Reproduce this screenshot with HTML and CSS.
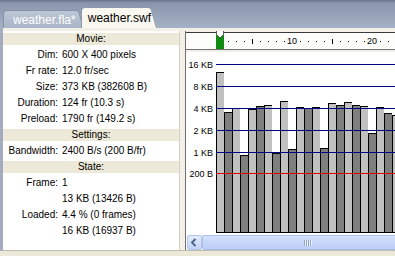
FILE: index.html
```html
<!DOCTYPE html>
<html lang="en">
<head>
    <meta charset="UTF-8">
    <title>weather.swf - Bandwidth Profiler</title>
    <link rel="stylesheet" href="styles.css">
</head>
<body>
    <div class="tabs">
        <div class="tab">weather.fla*</div>
        <div class="tab active">weather.swf</div>
    </div>

    <div class="main">
        <!-- movie info -->
        <div class="info">
            <div class="section">Movie:</div>
            <div class="row"><span class="key">Dim:</span><span class="val">600 X 400 pixels</span></div>
            <div class="row"><span class="key">Fr rate:</span><span class="val">12.0 fr/sec</span></div>
            <div class="row"><span class="key">Size:</span><span class="val">373 KB (382608 B)</span></div>
            <div class="row"><span class="key">Duration:</span><span class="val">124 fr (10.3 s)</span></div>
            <div class="row"><span class="key">Preload:</span><span class="val">1790 fr (149.2 s)</span></div>
            <div class="section">Settings:</div>
            <div class="row"><span class="key">Bandwidth:</span><span class="val">2400 B/s (200 B/fr)</span></div>
            <div class="section">State:</div>
            <div class="row"><span class="key">Frame:</span><span class="val">1</span></div>
            <div class="row"><span class="key"></span><span class="val">13 KB (13426 B)</span></div>
            <div class="row"><span class="key">Loaded:</span><span class="val">4.4 % (0 frames)</span></div>
            <div class="row"><span class="key"></span><span class="val">16 KB (16937 B)</span></div>
        </div>

        <!-- streaming graph -->
        <div class="graph">
            <div class="ruler">
                <i class="fr"></i><i class="fr dot"></i><i class="fr dot"></i><i class="fr dot"></i>
                <i class="fr tick"></i><i class="fr dot"></i><i class="fr dot"></i><i class="fr dot"></i>
                <i class="fr dot"></i><i class="fr num">10</i><i class="fr dot"></i><i class="fr dot"></i>
                <i class="fr dot"></i><i class="fr dot"></i><i class="fr tick"></i><i class="fr dot"></i>
                <i class="fr dot"></i><i class="fr dot"></i><i class="fr dot"></i><i class="fr num">20</i>
                <i class="fr dot"></i><i class="fr dot"></i><i class="fr dot"></i>
                <svg class="playhead" width="8" height="19" viewBox="0 0 8 19">
                    <rect x="0" y="4" width="8" height="15" fill="#118a11"/>
                    <polygon points="0.5,0.5 7.5,0.5 7.5,4.5 4,8 0.5,4.5" fill="#fff" stroke="#5a5a5a"/>
                </svg>
            </div>

            <div class="chart">
                <div class="bar" style="height:161px"></div>
                <div class="bar dk" style="height:121px"></div>
                <div class="bar" style="height:125px"></div>
                <div class="bar dk" style="height:78px"></div>
                <div class="bar" style="height:124px"></div>
                <div class="bar dk" style="height:127px"></div>
                <div class="bar" style="height:128px"></div>
                <div class="bar dk" style="height:80px"></div>
                <div class="bar" style="height:132px"></div>
                <div class="bar dk" style="height:84px"></div>
                <div class="bar" style="height:126px"></div>
                <div class="bar dk" style="height:125px"></div>
                <div class="bar" style="height:126px"></div>
                <div class="bar dk" style="height:85px"></div>
                <div class="bar" style="height:130px"></div>
                <div class="bar dk" style="height:128px"></div>
                <div class="bar" style="height:131px"></div>
                <div class="bar dk" style="height:128px"></div>
                <div class="bar" style="height:127px"></div>
                <div class="bar dk" style="height:100px"></div>
                <div class="bar" style="height:126px"></div>
                <div class="bar dk" style="height:120px"></div>
                <div class="bar" style="height:118px"></div>

                <div class="gl" style="top:6px"><span>16 KB</span><b></b></div>
                <div class="gl" style="top:28px"><span>8 KB</span><b></b></div>
                <div class="gl" style="top:50px"><span>4 KB</span><b></b></div>
                <div class="gl" style="top:72px"><span>2 KB</span><b></b></div>
                <div class="gl" style="top:94px"><span>1 KB</span><b></b></div>
                <div class="gl red" style="top:115px"><span>200 B</span><b></b></div>
            </div>

            <div class="hscroll">
                <div class="sbtn">
                    <svg width="13" height="13" viewBox="0 0 13 13">
                        <path d="M7.5 3 L4 6.5 L7.5 10" fill="none" stroke="#4d6185" stroke-width="1.8"/>
                    </svg>
                </div>
                <div class="sthumb"><span class="grip"></span></div>
            </div>
        </div>
    </div>
</body>
</html>
```

FILE: styles.css
```css
body {
    margin: 0;
    width: 395px;
    height: 256px;
    overflow: hidden;
    background: #ece9d8;
    font-family: "Liberation Sans", Arial, sans-serif;
    font-size: 10px;
    color: #000;
}

/* document tabs */
.tabs {
    height: 28px;
    display: flex;
    align-items: flex-end;
    padding-left: 3px;
    background: linear-gradient(#66738c 0, #8996ad 3px, #a5b1c4 28px);
}
.tab {
    position: relative;
    z-index: 0; /* own stacking context so the slanted edge sits under the text */
    flex: none;
    height: 17px;
    padding: 0 2px 0 9px;
    font-size: 12px;
    line-height: 18px;
    white-space: nowrap;
    color: #fff;
    background: linear-gradient(#bcc6d5, #aab5c7);
    border: 1px solid #8792a8;
    border-right: none;
    border-bottom: none;
    border-top-left-radius: 4px;
}
.tab::after {
    content: "";
    position: absolute;
    z-index: -1;
    top: -1px;
    right: -6px;
    bottom: 0;
    width: 10px;
    background: inherit;
    border-top: 1px solid #8792a8;
    border-right: 1px solid #8792a8;
    border-top-right-radius: 3px;
    transform: skewX(16deg);
    transform-origin: bottom left;
}
.tab.active {
    z-index: 1;
    height: 20px;
    margin-left: 3px;
    padding: 0 0 0 6px;
    line-height: 20px;
    color: #000;
    background: #f8f7f0;
    border-color: #8d98ab;
}
.tab.active::after {
    border-color: #8d98ab;
}

.main {
    display: flex;
    height: 219px;
    padding-top: 3px;
    border-left: 3px solid #a3adbf;
    border-bottom: 1px solid #bdbaae;
    background: #f3f1e7;
}

/* left info panel */
.info {
    width: 176px;
    flex: none;
    background: #fff;
    border-right: 1px solid #d3d0c4;
}
.section {
    height: 12px;
    margin: 2px 0;
    line-height: 12px;
    text-align: center;
    background: #ece9d8;
}
.row {
    display: flex;
    height: 16px;
    line-height: 16px;
    white-space: nowrap;
}
.key {
    width: 55px;
    text-align: right;
}
.val {
    margin-left: 4px;
}

/* right graph panel */
.graph {
    flex: 1;
    min-width: 0;
    margin-left: 5px;
    padding-top: 1px;
    border-left: 1px solid #6f6f6f;
    overflow: hidden;
}
.ruler {
    position: relative;
    display: flex;
    height: 16px;
    padding-left: 30px;
    border-top: 1px solid #3a3a3a;
    border-bottom: 1px solid #707070;
    background: #fcfcfa;
}
.fr {
    flex: none;
    width: 8px;
    display: flex;
    align-items: center;
    justify-content: center;
    font-style: normal;
    font-size: 9px;
}
.fr.dot::before {
    content: "";
    width: 1px;
    height: 1px;
    background: #000;
}
.fr.tick::before {
    content: "";
    width: 1px;
    height: 5px;
    background: #000;
}
.playhead {
    position: absolute;
    left: 30px;
    top: -3px;
}

.chart {
    position: relative;
    box-sizing: border-box;
    height: 183px;
    margin-top: 2px;
    padding: 0 0 2px 30px;
    display: flex;
    align-items: flex-end;
    background: #fff;
}
.bar {
    flex: none;
    box-sizing: border-box;
    width: 8px;
    border: 1px solid #000;
    border-right: none;
    background: #c0c0c0;
}
.bar.dk {
    background: #7f7f7f;
}
.gl {
    position: absolute;
    left: 0;
    right: 0;
    height: 13px;
    display: flex;
    align-items: center;
    font-size: 9px;
}
.gl span {
    width: 27px;
    margin-right: 3px;
    text-align: right;
}
.gl b {
    flex: 1;
    height: 1px;
    background: #000080;
}
.gl.red b {
    background: #e00000;
}

/* horizontal scrollbar */
.hscroll {
    display: flex;
    height: 15px;
    padding-left: 1px;
    background: #fff;
}
.sbtn {
    flex: none;
    box-sizing: border-box;
    width: 15px;
    display: flex;
    align-items: center;
    justify-content: center;
    background: linear-gradient(#e3ebfe, #c3d3f8);
    border: 1px solid #b3c5ef;
    border-radius: 2px;
}
.sthumb {
    flex: none;
    box-sizing: border-box;
    width: 211px;
    display: flex;
    align-items: center;
    justify-content: center;
    background: linear-gradient(#d4e0fc, #bccdf6);
    border: 1px solid #aabfea;
    border-radius: 2px;
}
.grip {
    width: 8px;
    height: 6px;
    background: repeating-linear-gradient(90deg, #8ea5dc 0, #8ea5dc 1px, #eef3ff 1px, #eef3ff 2px);
}
```
